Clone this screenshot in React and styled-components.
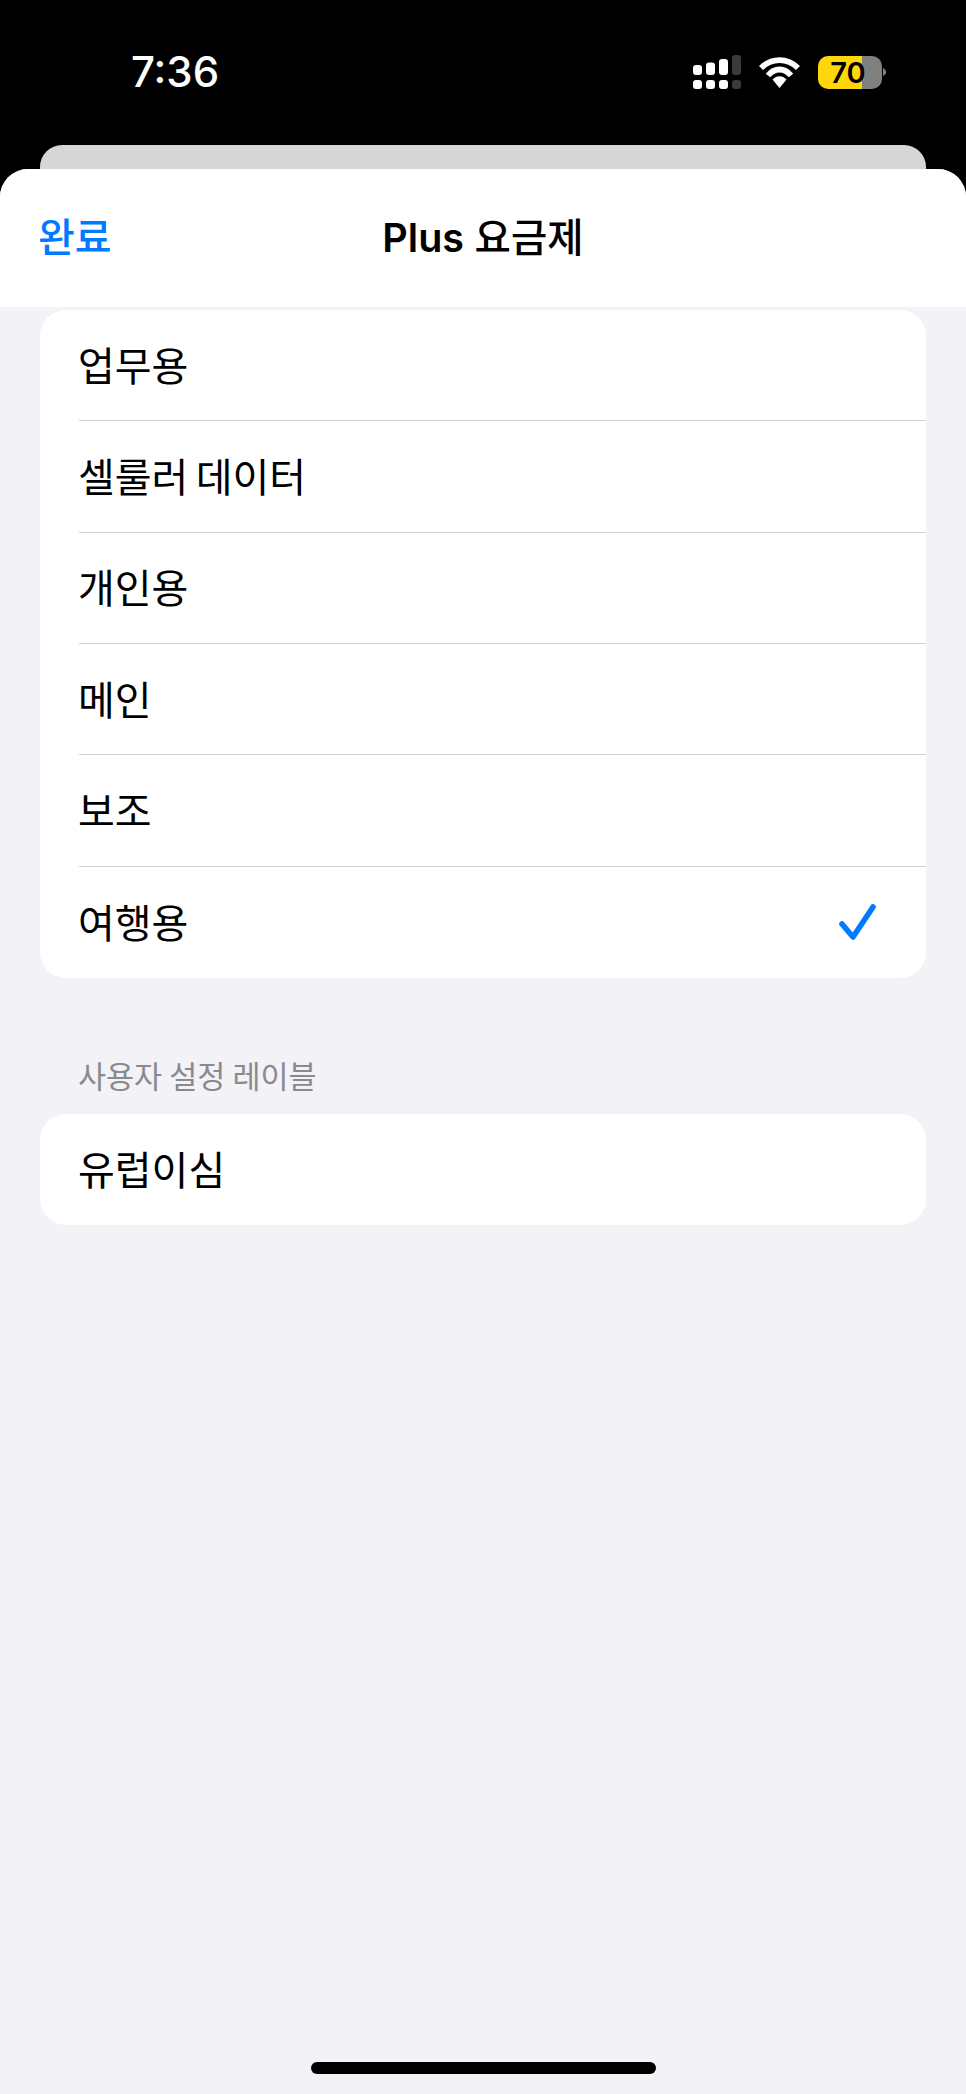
import styled, { createGlobalStyle } from "styled-components";

const GlobalStyle = createGlobalStyle`
html, body {
    margin: 0;
    padding: 0;
    background: #000000;
}
* {
    box-sizing: border-box;
}
`

const plans = ["업무용", "셀룰러 데이터", "개인용", "메인", "보조", "여행용"];

export default function App() {
    return (
        <>
            <GlobalStyle />
            <Screen>
                <StatusBar>
                    <Time>7:36</Time>
                    <StatusIcons>
                        <SignalIcon />
                        <WifiIcon />
                        <Battery>
                            <BatteryBody $level={69}>70</BatteryBody>
                            <BatteryNub />
                        </Battery>
                    </StatusIcons>
                </StatusBar>
                <BackCard />
                <Sheet>
                    <NavBar>
                        <DoneButton>완료</DoneButton>
                        <Title><TitleLatin>Plus</TitleLatin> 요금제</Title>
                    </NavBar>
                    <Content>
                        <Card>
                            {plans.map((plan, i) => (
                                <Row key={plan}>
                                    <RowInner $last={i === plans.length - 1}>
                                        <RowText>{plan}</RowText>
                                        {plan === "여행용" && <CheckIcon />}
                                    </RowInner>
                                </Row>
                            ))}
                        </Card>
                        <SectionLabel>사용자 설정 레이블</SectionLabel>
                        <Card>
                            <Row>
                                <RowInner $last>
                                    <RowText>유럽이심</RowText>
                                </RowInner>
                            </Row>
                        </Card>
                    </Content>
                    <HomeBar />
                </Sheet>
            </Screen>
        </>
    )
}

function SignalIcon() {
    return (
        <svg width="48" height="34" viewBox="0 0 48 34" fill="#ffffff">
            <rect x="0" y="10" width="9" height="10" rx="3" />
            <rect x="13" y="7.5" width="9" height="12.5" rx="3" />
            <rect x="26" y="4" width="9" height="16" rx="3" />
            <rect x="39" y="0" width="9" height="20" rx="3" fill="#3a3a3a" />
            <rect x="0" y="25" width="9" height="9" rx="3" />
            <rect x="13" y="25" width="9" height="9" rx="3" />
            <rect x="26" y="25" width="9" height="9" rx="3" />
            <rect x="39" y="25" width="9" height="9" rx="3" fill="#3a3a3a" />
        </svg>
    )
}

function WifiIcon() {
    return (
        <svg width="41" height="31" viewBox="0 0 41 31" fill="none" stroke="#ffffff" strokeWidth="5.8">
            <path d="M2 11C12.5 0.5 28.5 0.5 39 11" />
            <path d="M9 18.5C15.5 10.5 25.5 10.5 32 18.5" />
            <path d="M13.5 22.5L20.5 31L27.5 22.5C23.5 18 17.5 18 13.5 22.5Z" fill="#ffffff" stroke="none" />
        </svg>
    )
}

function CheckIcon() {
    return (
        <Check width="44" height="42" viewBox="0 0 44 42" fill="none" stroke="#007aff" strokeWidth="5.6" strokeLinecap="round" strokeLinejoin="round">
            <path d="M7 23L18 36L38 6" />
        </Check>
    )
}

const Screen = styled.div`
width: 966px;
height: 2094px;
display: flex;
flex-direction: column;
background: #000000;
font-family: "Inter", "Noto Sans CJK KR", sans-serif;
overflow: hidden;
`

const StatusBar = styled.div`
height: 145px;
flex-shrink: 0;
display: flex;
justify-content: space-between;
align-items: flex-start;
padding: 48px 80px 0 131px;
`

const Time = styled.div`
font-size: 42px;
line-height: 48px;
font-weight: 500;
color: #FFFFFF;
`

const StatusIcons = styled.div`
display: flex;
align-items: center;
gap: 18px;
margin-top: 7px;
`

const Battery = styled.div`
display: flex;
align-items: center;
gap: 1px;
`

const BatteryBody = styled.div`
width: 64px;
height: 33px;
padding-right: 4px;
border-radius: 10px;
display: flex;
align-items: center;
justify-content: center;
background: linear-gradient(90deg, #FFD60A ${props => props.$level}%, #808080 ${props => props.$level}%);
font-size: 29px;
font-weight: 600;
color: #000000;
`

const BatteryNub = styled.div`
width: 3px;
height: 9px;
clip-path: polygon(0 0, 100% 35%, 100% 65%, 0 100%);
background: #808080;
`

const BackCard = styled.div`
height: 24px;
flex-shrink: 0;
margin: 0 40px;
background: #D6D6D6;
border-radius: 22px 22px 0 0;
`

const Sheet = styled.div`
flex: 1;
display: flex;
flex-direction: column;
background: #F2F2F7;
border-radius: 28px 28px 0 0;
overflow: hidden;
`

const NavBar = styled.div`
height: 138px;
flex-shrink: 0;
display: grid;
grid-template-columns: 1fr auto 1fr;
align-items: center;
padding: 0 38px;
background: #FFFFFF;
`

const DoneButton = styled.div`
font-size: 40px;
line-height: 48px;
font-weight: 500;
color: #007AFF;
`

const Title = styled.div`
font-size: 39.5px;
line-height: 48px;
font-weight: 500;
color: #000000;
`

const TitleLatin = styled.span`
font-weight: 600;
`

const Content = styled.div`
flex: 1;
padding: 3px 40px 0;
`

const Card = styled.div`
background: #FFFFFF;
border-radius: 26px;
overflow: hidden;
`

const Row = styled.div`
height: 111.33px;
padding-left: 39px;
`

const RowInner = styled.div`
height: 100%;
display: flex;
align-items: center;
justify-content: space-between;
border-bottom: ${props => props.$last ? "none" : "1.5px solid #D1D1D6"};
`

const RowText = styled.span`
margin: -3px 0 0 -1px;
font-size: 40px;
word-spacing: -4px;
color: #000000;
`

const Check = styled.svg`
margin-right: 47px;
`

const SectionLabel = styled.div`
margin: 76px 0 0 38px;
height: 60px;
font-size: 30.5px;
line-height: 46px;
word-spacing: -1.5px;
color: #8A8A8E;
`

const HomeBar = styled.div`
width: 345px;
height: 12px;
flex-shrink: 0;
align-self: center;
margin-bottom: 20px;
border-radius: 6px;
background: #000000;
`
